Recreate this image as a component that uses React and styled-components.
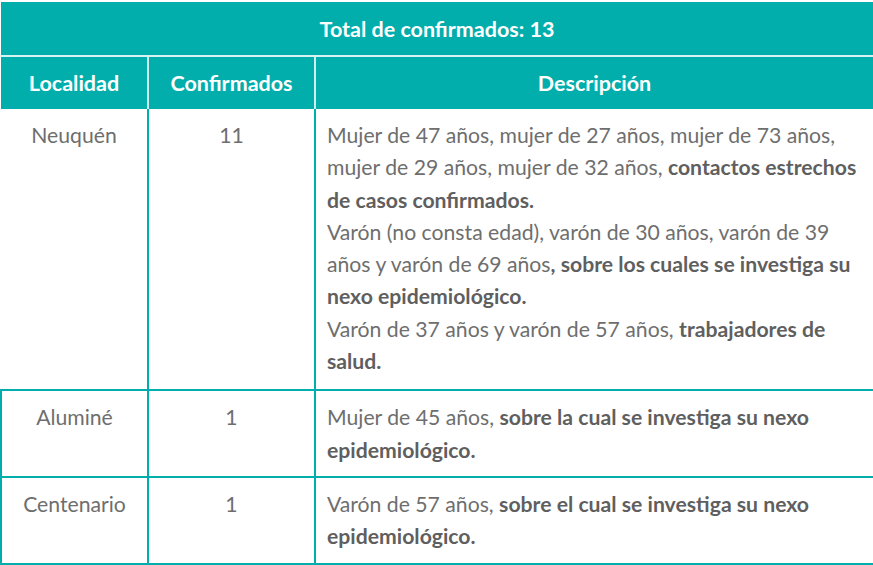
import React from "react";
import styled, { createGlobalStyle } from "styled-components";

const Global = createGlobalStyle`
  html, body { margin: 0; padding: 0; background: #fff; }
  body { font-family: Lato, "Open Sans", sans-serif; }
`;

const TEAL = "#02aeac";

const Table = styled.table`
  width: 873px;
  border-collapse: collapse;
  table-layout: fixed;
  margin-top: 2px;
`;

const TitleCell = styled.th`
  background: ${TEAL};
  color: #fff;
  font-size: 21.5px;
  font-weight: 700;
  height: 53px;
  padding: 0;
  text-align: center;
  border-bottom: 2px solid #d9f3f2;
`;

const HeadCell = styled.th`
  background: ${TEAL};
  color: #fff;
  font-size: 21.5px;
  font-weight: 700;
  height: 52px;
  padding: 0;
  text-align: center;
  border-left: ${(p) => (p.$divider ? "2px solid #cfeeee" : "none")};
`;

const Cell = styled.td`
  vertical-align: top;
  text-align: ${(p) => (p.$left ? "left" : "center")};
  padding-top: 10px;
  padding-bottom: ${(p) => (p.$first ? "12px" : "10px")};
  padding-left: ${(p) => (p.$left ? "11px" : "0")};
  padding-right: ${(p) => (p.$left ? "4px" : "0")};
  color: #6e6e6e;
  font-size: 21.2px;
  line-height: 32.3px;
  white-space: nowrap;
  border: 2px solid ${TEAL};
  border-top: ${(p) => (p.$first ? "none" : `2px solid ${TEAL}`)};
  border-left: ${(p) => (p.$noLeft ? "none" : `2px solid ${TEAL}`)};
  border-right: ${(p) => (p.$noRight ? "none" : `2px solid ${TEAL}`)};
`;

const B = styled.b`
  font-weight: 700;
  color: #5f5f5f;
`;

const rows = [
  {
    loc: "Neuquén",
    n: "11",
    first: true,
    desc: (
      <>
        Mujer de 47 años, mujer de 27 años, mujer de 73 años,
        <br />
        mujer de 29 años, mujer de 32 años, <B>contactos estrechos</B>
        <br />
        <B>de casos confirmados.</B>
        <br />
        Varón (no consta edad), varón de 30 años, varón de 39
        <br />
        años y varón de 69 años<B>, sobre los cuales se investiga su</B>
        <br />
        <B>nexo epidemiológico.</B>
        <br />
        Varón de 37 años y varón de 57 años, <B>trabajadores de</B>
        <br />
        <B>salud.</B>
      </>
    ),
  },
  {
    loc: "Aluminé",
    n: "1",
    desc: (
      <>
        Mujer de 45 años, <B>sobre la cual se investiga su nexo</B>
        <br />
        <B>epidemiológico.</B>
      </>
    ),
  },
  {
    loc: "Centenario",
    n: "1",
    desc: (
      <>
        Varón de 57 años, <B>sobre el cual se investiga su nexo</B>
        <br />
        <B>epidemiológico.</B>
      </>
    ),
  },
];

export default function App() {
  return (
    <>
      <Global />
      <Table>
        <colgroup>
          <col style={{ width: 147 }} />
          <col style={{ width: 167 }} />
          <col />
        </colgroup>
        <thead>
          <tr>
            <TitleCell colSpan={3}>Total de confirmados: 13</TitleCell>
          </tr>
          <tr>
            <HeadCell>Localidad</HeadCell>
            <HeadCell $divider>Confirmados</HeadCell>
            <HeadCell $divider>Descripción</HeadCell>
          </tr>
        </thead>
        <tbody>
          {rows.map((r) => (
            <tr key={r.loc}>
              <Cell $first={r.first} $noLeft={r.first}>{r.loc}</Cell>
              <Cell $first={r.first}>{r.n}</Cell>
              <Cell $first={r.first} $left $noRight>{r.desc}</Cell>
            </tr>
          ))}
        </tbody>
      </Table>
    </>
  );
}
